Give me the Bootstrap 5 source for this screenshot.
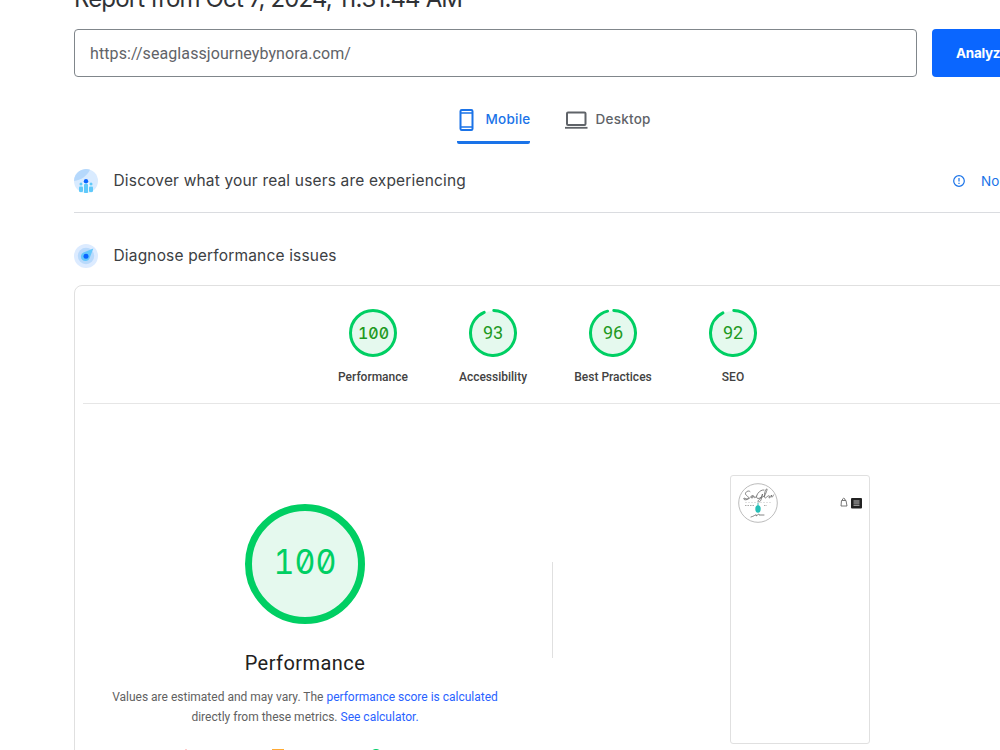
<!DOCTYPE html>
<html lang="en">
<head>
<meta charset="utf-8">
<meta name="viewport" content="width=device-width, initial-scale=1">
<title>PageSpeed Insights</title>
<link href="https://cdn.jsdelivr.net/npm/bootstrap@5.3.0/dist/css/bootstrap.min.css" rel="stylesheet">
<style>
html, body { overflow: hidden; }
body { height: 750px; font-family: Roboto, sans-serif; color: #3c4043; background: #fff; }
.report { display: flow-root; width: 959px; margin-left: 74px; }
.brand-font { font-family: Inter, sans-serif; white-space: nowrap; }
.report-title { display: flow-root; height: 29px; font-size: 24px; line-height: 30px; color: #303236; letter-spacing: -.86px; }
.report-title span { display: block; margin-top: -16px; }
.url-row { height: 48px; gap: 15px; }
.url-box { flex: none; width: 843px; height: 48px; border: 1px solid #80868b; border-radius: 4px; padding: 2px 15px 0; font-size: 16px; letter-spacing: .09px; color: #5f6368; }
.analyze { flex: none; width: 101px; height: 48px; background: #0a66ff; border-radius: 4px; font-size: 13.5px; font-weight: 700; padding: 0 0 0 24px; text-align: left; color: #fff; border: 0; letter-spacing: -.3px; }
.device-tabs { height: 44px; margin-top: 23px; padding-left: 382.5px; }
.device-tab { height: 44px; font-size: 13.5px; font-weight: 500; color: #5f6368; padding: 0 0 5px; letter-spacing: .25px; }
.device-tab.current { width: 73px; margin-right: 35px; color: #1a73e8; border-bottom: 3px solid #1a73e8; padding-bottom: 2px; border-radius: 0 0 2px 2px; }
.section-head { font-size: 15.5px; font-weight: 400; gap: 15.5px; letter-spacing: .17px; }
.section-head svg { flex: none; }
.discover { height: 69px; border-bottom: 1px solid #dadce0; padding-top: 6px; }
.nodata { margin-left: auto; width: 81px; color: #1a73e8; font-size: 13.5px; white-space: nowrap; gap: 15px; }
.diagnose { height: 72px; padding-top: 14px; }
.panel { height: 500px; border: 1px solid #e0e0e0; border-radius: 8px; }
.gauges { height: 118px; margin: 0 8px; padding-top: 23px; padding-right: 1px; border-bottom: 1px solid #e6e6e6; }
.gauge { width: 120px; font-size: 12px; font-weight: 500; color: #424242; line-height: 16px; }
.gauge svg { display: block; margin: 0 auto 12px; }
.ring-num { font-family: Roboto, sans-serif; font-size: 18px; fill: #1f9a1f; text-anchor: middle; font-weight: 400; }
.mono-num { font-family: Inter, "Liberation Mono", monospace; font-feature-settings: "zero" 1, "tnum" 1; text-anchor: middle; }
.overview { height: 360px; }
.score { width: 477px; padding-top: 99px; padding-right: 17px; font-size: 12px; line-height: 20px; color: #616161; }
.score h2 { font-size: 20px; line-height: 24px; font-weight: 400; color: #212121; margin: 26px 0 12px; letter-spacing: .45px; }
.score a { color: #2962ff; text-decoration: none; }
.divider { width: 1px; height: 96px; background: #e0e0e0; margin-top: 158px; }
.shot { width: 140px; height: 269px; margin: 71px 0 0 177px; border: 1px solid #e0e0e0; border-radius: 3px; padding: 7px 7px 0 7px; }
.legend { margin-top: 22px; }
.tab-icon { margin-left: 1px; }
</style>
</head>
<body>
<main class="report">
  <h1 class="report-title brand-font mb-0 fw-normal"><span>Report from Oct 7, 2024, 11:31:44 AM</span></h1>
  <div class="url-row d-flex">
    <div class="url-box d-flex align-items-center">https://seaglassjourneybynora.com/</div>
    <button class="analyze brand-font">Analyze</button>
  </div>
  <nav class="device-tabs d-flex brand-font">
    <div class="device-tab current d-flex align-items-center">
      <svg width="20" height="24" viewBox="0 0 20 24" class="tab-icon me-2 flex-shrink-0" fill="none" stroke="#1a73e8" stroke-width="2"><rect x="2.500" y="2" width="12" height="20" rx="1.200"/><path d="M2.500 5h12M2.500 19h12" stroke-width="1.600"/></svg>
      <span>Mobile</span>
    </div>
    <div class="device-tab d-flex align-items-center">
      <svg width="23" height="20" viewBox="0 0 23 20" class="me-2 flex-shrink-0" fill="none" stroke="#5f6368" stroke-width="2"><rect x="2" y="2.500" width="18.500" height="12.500" rx="1"/><path d="M0 17.800h22.500" stroke-width="1.800"/></svg>
      <span>Desktop</span>
    </div>
  </nav>
  <section class="section-head discover d-flex align-items-center brand-font">
    <svg width="24" height="24" viewBox="0 0 24 24"><circle cx="12" cy="12" r="12" fill="#d9ebff"/><path d="M0 12A12 12 0 0 1 16 .7C13 7 7 11 0 12Z" fill="#b5d8fc"/><path d="M6 14h12v10H6z" fill="#e9f7ff"/><g fill="#60c9fa"><rect x="5" y="17.500" width="4" height="5.500" rx="1"/><rect x="10" y="15" width="4" height="9" rx=".8"/><rect x="15" y="17.500" width="4" height="5.500" rx="1"/><circle cx="7" cy="15" r="1.500"/><circle cx="17" cy="15" r="1.500"/></g><circle cx="12" cy="12.300" r="2.200" fill="#0a66ff"/></svg>
    <span>Discover what your real users are experiencing</span>
    <div class="nodata d-flex align-items-center"><svg width="14" height="14" viewBox="0 0 14 14" fill="none" stroke="#1a73e8" stroke-width="1.200"><circle cx="7" cy="7" r="5.300"/><path d="M7 4v3.600M7 8.800v1.300"/></svg><span>No Data</span></div>
  </section>
  <section class="section-head diagnose d-flex align-items-center brand-font">
    <svg width="24" height="24" viewBox="0 0 24 24"><circle cx="12" cy="12" r="12" fill="#dcebff"/><circle cx="12" cy="12" r="8.200" fill="#b9dafc"/><path d="M19.300 4.400 15.500 14.500A4.500 4.500 0 1 1 9.500 8.500Z" fill="#64c8fb"/><circle cx="12" cy="12.200" r="2.500" fill="#0a66ff"/></svg>
    <span>Diagnose performance issues</span>
  </section>
  <section class="panel">
    <div class="gauges d-flex justify-content-center text-center">
      <div class="gauge"><svg width="48" height="48" viewBox="0 0 48 48"><circle cx="24" cy="24" r="22.500" fill="#e5f9ee" stroke="#00cf63" stroke-width="3"/><text class="mono-num" x="24.500" y="30" font-size="16.500" fill="#1f9a1f" textLength="31" lengthAdjust="spacingAndGlyphs">100</text></svg>Performance</div>
      <div class="gauge"><svg width="48" height="48" viewBox="0 0 48 48"><circle cx="24" cy="24" r="22" fill="#e5f9ee"/><circle cx="24" cy="24" r="22.500" fill="none" stroke="#00cf63" stroke-width="3" stroke-linecap="round" pathLength="100" stroke-dasharray="93 7" transform="rotate(-88 24 24)"/><text class="ring-num" x="24" y="30">93</text></svg>Accessibility</div>
      <div class="gauge"><svg width="48" height="48" viewBox="0 0 48 48"><circle cx="24" cy="24" r="22" fill="#e5f9ee"/><circle cx="24" cy="24" r="22.500" fill="none" stroke="#00cf63" stroke-width="3" stroke-linecap="round" pathLength="100" stroke-dasharray="95.500 4.500" transform="rotate(-88 24 24)"/><text class="ring-num" x="24" y="30">96</text></svg>Best Practices</div>
      <div class="gauge"><svg width="48" height="48" viewBox="0 0 48 48"><circle cx="24" cy="24" r="22" fill="#e5f9ee"/><circle cx="24" cy="24" r="22.500" fill="none" stroke="#00cf63" stroke-width="3" stroke-linecap="round" pathLength="100" stroke-dasharray="92 8" transform="rotate(-88 24 24)"/><text class="ring-num" x="24" y="30">92</text></svg>SEO</div>
    </div>
    <div class="overview d-flex">
      <div class="score text-center">
        <svg class="d-block mx-auto" width="122" height="122" viewBox="0 0 122 122"><circle cx="61" cy="61" r="56.500" fill="#e5f9ee" stroke="#00cf63" stroke-width="7"/><text class="mono-num" x="61" y="71" font-size="34.500" fill="#00cf63" font-weight="400" textLength="63" lengthAdjust="spacingAndGlyphs">100</text></svg>
        <h2>Performance</h2>
        <div>Values are estimated and may vary. The <a href="#">performance score is calculated</a><br>directly from these metrics. <a href="#">See calculator.</a></div>
        <svg class="legend d-block" width="320" height="12" viewBox="0 0 320 12"><path d="m111 0 6 12h-12Z" fill="#f33"/><path d="M197 0h12v12h-12z" fill="#fa3"/><circle cx="301" cy="6" r="6" fill="#0c6"/></svg>
      </div>
      <div class="divider"></div>
      <div class="shot d-flex justify-content-between">
        <svg width="40" height="40" viewBox="0 0 40 40" fill="none"><circle cx="20" cy="20" r="19.300" stroke="#aaa" stroke-width=".8"/><g stroke="#666" stroke-width=".8" stroke-linecap="round"><path d="M12 8.500c-2-2-6 1.500-4 3.500 2 1.500 4 3 1 4.500-2 1-4-.3-3-1.500 3 1.500 5 1.500 7-1.500 1-2 3-.5 1.500 1.500-2 1-1-3 1.500-2 0 2 1 3 2.500 0"/><path d="M26 7c-5-1-10 8-6 8.500 3 0 4.500-3 4.500-4.500-1 3-1 8-4 8-2-1 3-5 6-6 3-6 3-8 2-7-2 2-3 9-1 9 2-1 2-3 4-2-1 3 0 3 2-1 0 4 1 2 2 0"/><path d="M13 34c4-1 6-4 5-1 2-1 3-3 3-1h5"/></g><path d="M7 19.500h26" stroke="#ccc" stroke-width=".6" stroke-dasharray="2 1"/><path d="M7 22.500h10m9 0h3" stroke="#aaa" stroke-dasharray="1.500 1"/><path d="M20 20v4" stroke="#39b9b1"/><ellipse cx="20" cy="26" rx="2.700" ry="3.700" fill="#25bfb7"/></svg>
        <svg width="22" height="40" viewBox="0 0 22 40"><path d="M1.500 17.500h4.500l1 5.500H1Zm1-.5v-1q1-1.500 2.500 0v1" fill="none" stroke="#555" stroke-width=".8"/><rect x="11" y="15" width="11" height="10.500" rx="1" fill="#222"/><path d="M13.500 18h6m-6 2h6m-6 2.200h6" stroke="#ddd" stroke-width=".9"/></svg>
      </div>
    </div>
  </section>
</main>
<script src="https://cdn.jsdelivr.net/npm/bootstrap@5.3.0/dist/js/bootstrap.bundle.min.js"></script>
</body>
</html>
